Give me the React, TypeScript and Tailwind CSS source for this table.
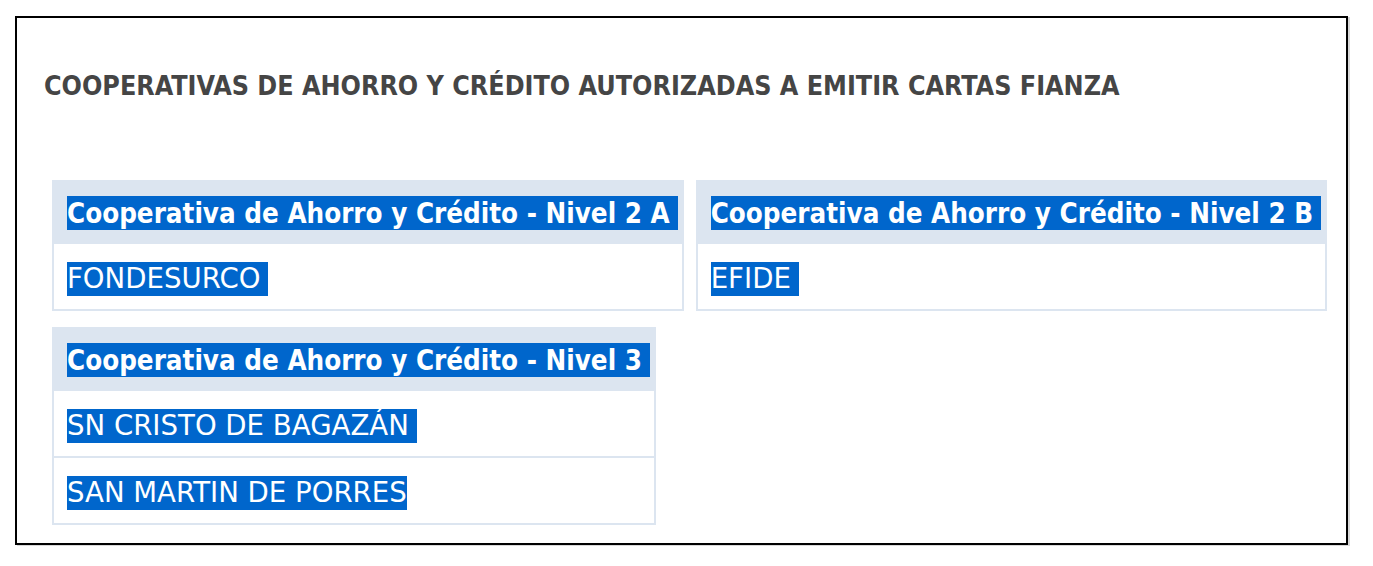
import React from 'react';

interface Group {
  title: string;
  items: string[];
}

const groups: Group[] = [
  { title: 'Cooperativa de Ahorro y Crédito - Nivel 2 A', items: ['FONDESURCO'] },
  { title: 'Cooperativa de Ahorro y Crédito - Nivel 2 B', items: ['EFIDE'] },
  { title: 'Cooperativa de Ahorro y Crédito - Nivel 3', items: ['SN CRISTO DE BAGAZÁN', 'SAN MARTIN DE PORRES'] },
];

// selected-text look: blue highlight, white text, trailing space kept
const Sel: React.FC<{ children: React.ReactNode; trail?: boolean; className?: string }> = ({ children, trail = true, className = '' }) => (
  <span className={`inline-block h-[34px] leading-[34px] bg-[#0066cc] text-white whitespace-nowrap ${trail ? 'pr-2' : ''} ${className}`}>
    {children}
  </span>
);

const Card: React.FC<{ group: Group }> = ({ group }) => (
  <div className="border-2 border-[#dce5f0] bg-white">
    <div className="bg-[#dce5f0] h-[60px] pt-[14px] pl-[13px] pr-1">
      <Sel className="font-bold text-[27.5px]">
        <span style={{ fontFamily: '"DejaVu Sans Condensed", "DejaVu Sans", sans-serif' }}>{group.title}</span>
      </Sel>
    </div>
    {group.items.map((item, i) => (
      <div key={item} className="h-[67px] border-t-2 border-[#dce5f0] pt-[18px] pl-[13px]">
        <Sel trail={i < group.items.length - 1 || group.items.length === 1} className="text-[27.6px]">
          {item}
        </Sel>
      </div>
    ))}
  </div>
);

export default function App() {
  return (
    <div
      className="bg-white w-[1373px] h-[566px] pt-4 pl-[15px]"
      style={{ fontFamily: '"DejaVu Sans", Verdana, sans-serif' }}
    >
      <div className="w-[1333px] h-[529px] border-2 border-black shadow-[2px_1px_0_#d8d8d8] pl-[27px] pt-[54px]">
        <h1
          className="text-[26.65px] leading-[27px] font-bold text-[#454545] whitespace-nowrap"
          style={{ fontFamily: '"DejaVu Sans Condensed", "DejaVu Sans", sans-serif' }}
        >
          COOPERATIVAS DE AHORRO Y CRÉDITO AUTORIZADAS A EMITIR CARTAS FIANZA
        </h1>
        <div className="flex flex-wrap items-start gap-x-3 gap-y-4 mt-[81px] ml-[8px] w-[1290px]">
          {groups.map((g) => (
            <Card key={g.title} group={g} />
          ))}
        </div>
      </div>
    </div>
  );
}
